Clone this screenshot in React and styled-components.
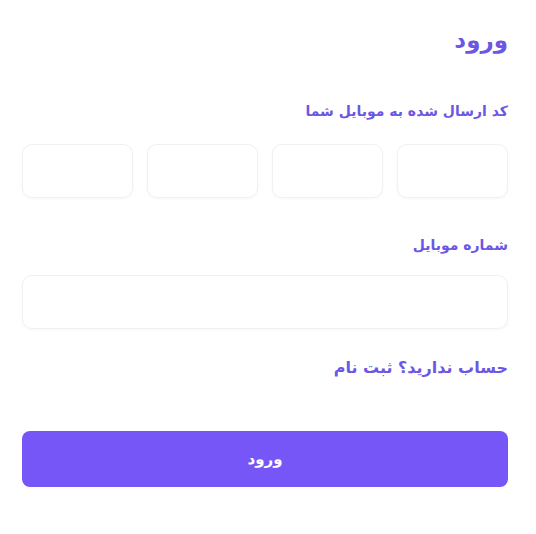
import React from 'react';
import styled, { createGlobalStyle } from 'styled-components';

const GlobalStyle = createGlobalStyle`
  html, body {
    margin: 0;
    padding: 0;
    background: #ffffff;
    font-family: "DejaVu Sans", "Noto Sans", sans-serif;
  }
`;

const Page = styled.div`
  direction: rtl;
  padding: 22px 28px 40px 22px;
  display: flex;
  flex-direction: column;
`;

const Title = styled.h1`
  margin: 0 0 41px;
  font-size: 23px;
  line-height: 36px;
  font-weight: 700;
  color: #6c57e4;
`;

const Label = styled.label`
  display: block;
  margin-bottom: ${(p) => p.$gap}px;
  font-size: 14px;
  line-height: 24px;
  font-weight: 700;
  color: #6c57e4;
`;

const CodeRow = styled.div`
  display: grid;
  grid-template-columns: repeat(4, 1fr);
  gap: 14px;
  margin-bottom: 35px;
`;

const Field = styled.input`
  box-sizing: border-box;
  width: 100%;
  height: 54px;
  border: 1px solid #f0f1f4;
  border-radius: 10px;
  background: #ffffff;
  box-shadow: 0 1px 3px rgba(30, 40, 60, 0.04);
  font-family: inherit;
  font-size: 16px;
  text-align: center;
  outline: none;
`;

const SignupLink = styled.a`
  display: block;
  margin: 26px 0 50px;
  font-size: 16px;
  line-height: 26px;
  font-weight: 700;
  color: #6c57e4;
  text-decoration: none;
  cursor: pointer;
`;

const Submit = styled.button`
  height: 56px;
  border: none;
  border-radius: 8px;
  background: #7656f6;
  color: #ffffff;
  font-family: inherit;
  font-size: 15px;
  font-weight: 700;
  cursor: pointer;
`;

export default function App() {
  return (
    <>
      <GlobalStyle />
      <Page>
        <Title>ورود</Title>
        <Label $gap={21}>کد ارسال شده به موبایل شما</Label>
        <CodeRow>
          <Field maxLength={1} />
          <Field maxLength={1} />
          <Field maxLength={1} />
          <Field maxLength={1} />
        </CodeRow>
        <Label $gap={18}>شماره موبایل</Label>
        <Field />
        <SignupLink>حساب ندارید؟ ثبت نام</SignupLink>
        <Submit>ورود</Submit>
      </Page>
    </>
  );
}
